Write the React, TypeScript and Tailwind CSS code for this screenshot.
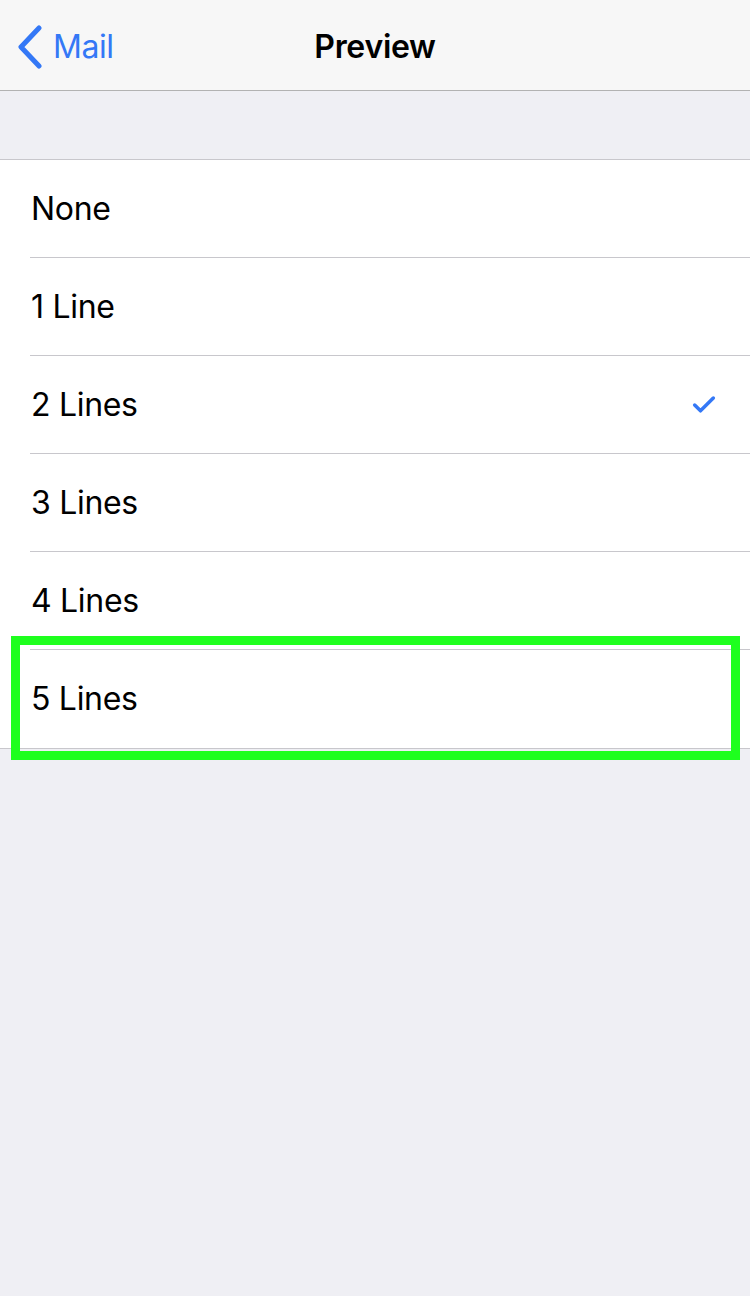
import { Check } from 'lucide-react';

const options = ['None', '1 Line', '2 Lines', '3 Lines', '4 Lines', '5 Lines'];
const selected = '2 Lines';

export default function App() {
  return (
    <div
      className="relative flex min-h-[1296px] w-[750px] flex-col bg-[#efeff4]"
      style={{ fontFamily: 'Inter, "Noto Sans", sans-serif' }}
    >
      <header className="relative flex h-[91px] items-center justify-center border-b border-[#b2b2b2] bg-[#f7f7f7] pt-[3px]">
        <button className="absolute left-[16px] top-[2px] flex h-[90px] items-center gap-[9px] text-[#3478f6]">
          <svg width="28" height="44" viewBox="0 0 28 44" fill="none">
            <path
              d="M23 3 L5 22 L23 41"
              stroke="currentColor"
              strokeWidth="5"
              strokeLinecap="round"
              strokeLinejoin="round"
            />
          </svg>
          <span className="text-[32px] tracking-[-0.5px]">Mail</span>
        </button>
        <h1 className="text-[32px] font-semibold tracking-[-0.3px] text-black">Preview</h1>
      </header>

      <div className="h-[68px]" />

      <ul className="border-y border-[#c8c7cc] bg-white">
        {options.map((label, i) => (
          <li key={label} className="pl-[30px]">
            <div
              className={
                'flex h-[98px] items-center justify-between pr-[32px] ' +
                (i < options.length - 1 ? 'border-b border-[#c8c7cc]' : '')
              }
            >
              <span className="pl-[1px] text-[32px] tracking-[-0.3px] text-black">{label}</span>
              {label === selected && <Check className="h-[28px] w-[28px] text-[#3478f6]" strokeWidth={3} />}
            </div>
          </li>
        ))}
      </ul>

      <div className="pointer-events-none absolute left-[11px] top-[636px] h-[124px] w-[729px] border-[9px] border-[#1eff1e]" />
    </div>
  );
}
